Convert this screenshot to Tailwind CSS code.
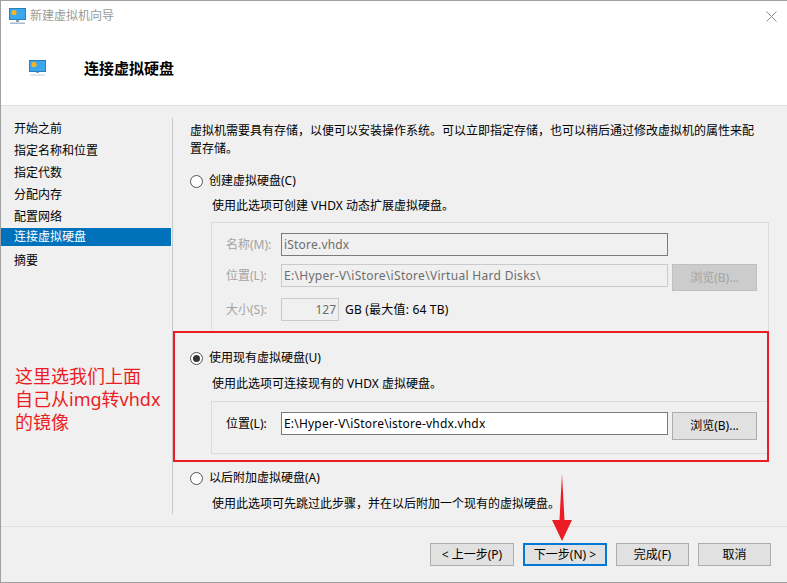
<!DOCTYPE html>
<html lang="zh-CN">
<head>
    <meta charset="UTF-8">
    <title>新建虚拟机向导</title>
    <script src="https://cdn.jsdelivr.net/npm/@tailwindcss/browser@4"></script>
</head>
<body class="bg-[#f0f0f0] overflow-hidden">
    <div class="relative w-[787px] h-[583px] flex flex-col border-l border-b border-t border-[#a0a0a0] font-['Noto_Sans','Noto_Sans_CJK_SC',sans-serif] text-[12px] leading-[18px] text-black">
        <!-- Title bar -->
        <div class="h-[30px] shrink-0 bg-white flex items-center pl-[8px] pr-[10px]">
            <svg class="w-[17px] h-[17px] mr-[4px]" viewBox="0 0 17 17">
                <rect x="0.5" y="0.5" width="16" height="11" fill="#3ba7ee" stroke="#2a7fb8"/>
                <circle cx="5" cy="4.5" r="2.6" fill="#ffb31a"/>
                <rect x="7" y="12" width="3" height="2" fill="#8aa4b5"/>
                <rect x="1" y="14.5" width="15" height="1.5" fill="#a8bccb"/>
            </svg>
            <span class="text-[#9a9a9a]">新建虚拟机向导</span>
            <svg class="ml-auto w-[11px] h-[11px]" viewBox="0 0 11 11" fill="none" stroke="#8a8a8a">
                <path d="M0.5 0.5L10.5 10.5M10.5 0.5L0.5 10.5"/>
            </svg>
        </div>

        <!-- Header -->
        <div class="h-[75px] shrink-0 bg-white border-b border-[#dfdfdf] flex items-center pl-[28px]">
            <svg class="w-[17px] h-[16px]" viewBox="0 0 17 16">
                <rect x="0.5" y="0.5" width="16" height="11" fill="#3ba7ee" stroke="#2a7fb8"/>
                <circle cx="5" cy="4.5" r="2.6" fill="#ffb31a"/>
                <rect x="7" y="12" width="3" height="1" fill="#8aa4b5"/>
                <rect x="1" y="14.5" width="15" height="1" fill="#c4d2dc"/>
            </svg>
            <span class="ml-[38px] text-[15px] font-bold">连接虚拟硬盘</span>
        </div>

        <!-- Body -->
        <div class="flex h-[421px] shrink-0 border-b border-[#dfdfdf]">
            <!-- Steps -->
            <div class="w-[170px] shrink-0 pt-[12px]">
                <div class="h-[22px] pl-[13px] flex items-center">开始之前</div>
                <div class="h-[22px] pl-[13px] flex items-center">指定名称和位置</div>
                <div class="h-[22px] pl-[13px] flex items-center">指定代数</div>
                <div class="h-[22px] pl-[13px] flex items-center">分配内存</div>
                <div class="h-[22px] pl-[13px] flex items-center">配置网络</div>
                <div class="h-[18px] mb-[4px] pl-[13px] flex items-center bg-[#0072bc] text-white">连接虚拟硬盘</div>
                <div class="h-[22px] pl-[13px] flex items-center">摘要</div>
            </div>

            <!-- Options -->
            <div class="w-[612px] h-[396px] mt-[12px] ml-[1px] border-l border-[#c8c8c8] pl-[17px]">
                <p class="mt-[4px] w-[575px]">虚拟机需要具有存储，以便可以安装操作系统。可以立即指定存储，也可以稍后通过修改虚拟机的属性来配置存储。</p>

                <label class="flex items-center mt-[14px] h-[18px]">
                    <span class="w-[13px] h-[13px] rounded-full border border-[#555] bg-white mr-[6px]"></span>
                    <span>创建虚拟硬盘(C)</span>
                </label>
                <p class="ml-[22px] mt-[7px]">使用此选项可创建 VHDX 动态扩展虚拟硬盘。</p>

                <!-- New disk group, disabled -->
                <div class="ml-[21px] mt-[7px] w-[558px] h-[111px] border border-[#dcdcdc] pt-[10px] pl-[14px] text-[#a3a3a3]">
                    <div class="flex items-center h-[23px]">
                        <span class="w-[55px] shrink-0">名称(M):</span>
                        <div class="w-[387px] shrink-0 h-[23px] border border-[#7a7a7a] px-[2px] flex items-center text-[#6d6d6d] tracking-[0.2px]">iStore.vhdx</div>
                    </div>
                    <div class="flex items-start mt-[8px]">
                        <span class="w-[55px] shrink-0 leading-[23px]">位置(L):</span>
                        <div class="w-[387px] shrink-0 h-[23px] border border-[#cacaca] px-[2px] flex items-center text-[#6d6d6d] tracking-[0.3px]">E:\Hyper-V\iStore\iStore\Virtual Hard Disks\</div>
                        <div class="ml-[4px] w-[85px] shrink-0 h-[27px] bg-[#cccccc] border border-[#bfbfbf] flex items-center justify-center text-[#a3a3a3]">浏览(B)...</div>
                    </div>
                    <div class="flex items-center mt-[7px]">
                        <span class="w-[55px] shrink-0">大小(S):</span>
                        <div class="w-[58px] shrink-0 h-[23px] border border-[#cacaca] pr-[2px] flex items-center justify-end text-[#6d6d6d]">127</div>
                        <span class="ml-[6px] text-black tracking-[0.2px]">GB (最大值: 64 TB)</span>
                    </div>
                </div>

                <label class="flex items-center mt-[16px] h-[18px]">
                    <span class="w-[13px] h-[13px] rounded-full border border-[#555] bg-white mr-[6px] flex items-center justify-center">
                        <span class="w-[7px] h-[7px] rounded-full bg-[#333]"></span>
                    </span>
                    <span>使用现有虚拟硬盘(U)</span>
                </label>
                <p class="ml-[22px] mt-[8px]">使用此选项可连接现有的 VHDX 虚拟硬盘。</p>

                <!-- Existing disk group -->
                <div class="ml-[21px] mt-[8px] w-[558px] h-[53px] border border-[#dcdcdc] pt-[10px] pl-[14px]">
                    <div class="flex items-start">
                        <span class="w-[55px] shrink-0 leading-[23px]">位置(L):</span>
                        <div class="w-[387px] shrink-0 h-[23px] bg-white border border-[#7a7a7a] px-[2px] flex items-center tracking-[0.2px]">E:\Hyper-V\iStore\istore-vhdx.vhdx</div>
                        <div class="ml-[4px] w-[85px] shrink-0 h-[28px] bg-[#e1e1e1] border border-[#adadad] flex items-center justify-center">浏览(B)...</div>
                    </div>
                </div>

                <label class="flex items-center mt-[15px] h-[18px]">
                    <span class="w-[13px] h-[13px] rounded-full border border-[#555] bg-white mr-[6px]"></span>
                    <span>以后附加虚拟硬盘(A)</span>
                </label>
                <p class="ml-[22px] mt-[8px]">使用此选项可先跳过此步骤，并在以后附加一个现有的虚拟硬盘。</p>
            </div>
        </div>

        <!-- Footer buttons -->
        <div class="flex items-start pt-[16px] pl-[429px]">
            <div class="w-[84px] h-[23px] bg-[#e1e1e1] border border-[#adadad] flex items-center justify-center">&lt; 上一步(P)</div>
            <div class="ml-[9px] w-[84px] h-[23px] bg-[#e1e1e1] border-2 border-[#0078d7] flex items-center justify-center">下一步(N) &gt;</div>
            <div class="ml-[9px] w-[73px] h-[23px] bg-[#e1e1e1] border border-[#adadad] flex items-center justify-center">完成(F)</div>
            <div class="ml-[9px] w-[73px] h-[23px] bg-[#e1e1e1] border border-[#adadad] flex items-center justify-center">取消</div>
        </div>

        <!-- Screenshot annotations -->
        <div class="absolute left-[172px] top-[330px] w-[596px] h-[131px] border-2 border-[#ed1c24]"></div>
        <div class="absolute left-[14px] top-[364px] text-[18px] leading-[23px] text-[#ed1c24]">这里选我们上面<br>自己从img转vhdx<br>的镜像</div>
        <svg class="absolute left-[551px] top-[473px] w-[20px] h-[68px]" viewBox="0 0 20 68">
            <path d="M10 0L12.5 46L20 46L10 67L0 46L7.5 46Z" fill="#ed1c24"/>
        </svg>
    </div>
</body>
</html>
